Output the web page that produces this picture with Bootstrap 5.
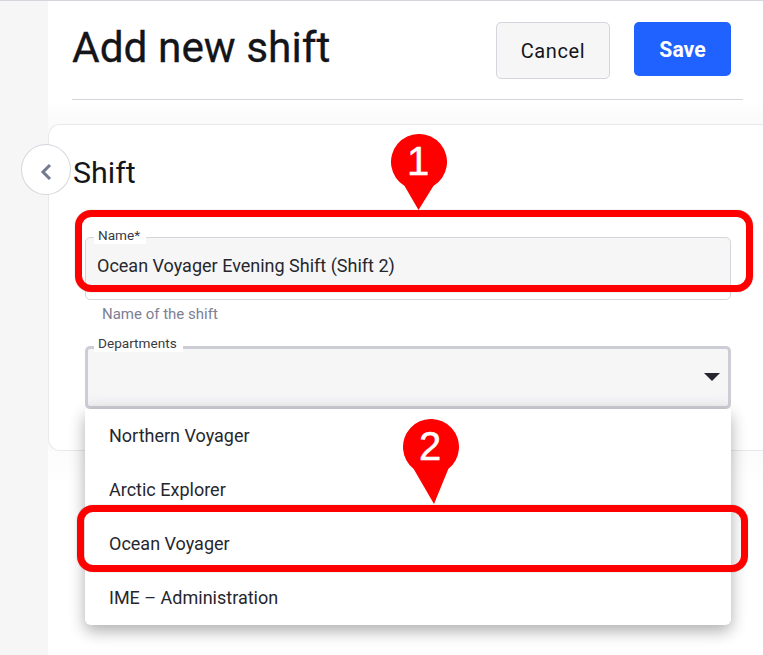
<!DOCTYPE html>
<html lang="en">
<head>
<meta charset="utf-8">
<link href="https://cdn.jsdelivr.net/npm/bootstrap@5.3.0/dist/css/bootstrap.min.css" rel="stylesheet">
<style>
html,body{height:100%;overflow:hidden}
body{font-family:Roboto,sans-serif;color:#14151a;background:#fff}
.shell{height:655px;border-top:1px solid #d5d5dc;position:relative;overflow:hidden}
.strip{width:48px;background:#f6f6f7;flex:none}
.mainpane{background:linear-gradient(#fff 0,#fff 100px,#fafafa 124px,#fafafa 449px,#fcfcfc 450px,#fff 490px)}
.headbar{margin:0 20px 0 24px;height:99px;border-bottom:1px solid #d5d5dc}
.pagetitle{font-size:42.4px;font-weight:400;line-height:48px;margin:0;padding-top:23px;-webkit-text-stroke:.3px #14151a}
.btn-cancel{width:114px;height:57px;margin-top:21px;margin-right:24px;background:#f6f6f7;border:1px solid #d5d5dc;border-radius:5px;color:#14151a;font-size:20px;letter-spacing:.6px;padding:0}
.btn-save{width:97px;height:54px;margin-top:21px;margin-right:12px;background:#1f62ff;border:0;border-radius:5px;color:#fff;font-size:21.2px;font-weight:700;padding:1px 0 0}
.formcard{margin-top:24px;height:327px;background:#fff;border:1px solid #e9e9ed;border-right:0;border-radius:12px 0 0 12px;padding:26px 0 0 24px;position:relative}
.backbtn{position:absolute;left:-28px;top:19px;width:50px;height:51px;border-radius:50%;background:#fff;border:1px solid #d5d5dc;padding:5px 0 0}
.cardtitle{font-size:30.4px;font-weight:400;line-height:44px;margin:0}
.fieldbox{margin:42px 32px 0 12px;height:63px;border:1px solid #d5d5dc;border-radius:5px;position:relative;background:linear-gradient(#f6f6f7 0,#f6f6f7 48px,#fff 48px);padding:14px 11px 0;font-size:18px;line-height:28px;color:#26272e}
.fieldlegend{position:absolute;left:8px;top:-12px;font-size:13.6px;line-height:18px;background:#fff;padding:0 6px 0 4px;color:#383a42}
.fieldhelp{margin:4px 0 0 29px;font-size:15px;line-height:20px;color:#7c8094}
.selectbox{margin:22px 32px 0 12px;height:63px;border:3px solid #cdcdd6;border-radius:5px;position:relative;background:linear-gradient(#f6f6f7 0,#f6f6f7 44px,#f0f0f3 100%)}
.selectbox .fieldlegend{left:6px;top:-15px}
.caret-down{position:absolute;right:8px;top:24px;width:0;height:0;border-left:8px solid transparent;border-right:8px solid transparent;border-top:8px solid #26272e}
.optmenu{position:absolute;left:85px;top:408px;width:646px;background:#fff;border-radius:0 0 6px 6px;box-shadow:0 6px 16px rgba(0,0,0,.32);font-size:18px;color:#26272e}
.optitem{height:54px;line-height:54px;padding-left:24px}
.mark-ring{position:absolute;border:7px solid #f00;border-radius:16px;box-shadow:0 0 1px rgba(0,0,0,.5)}
.ring-a{left:75px;top:209px;width:678px;height:82px}
.ring-b{left:77px;top:504px;width:671px;height:67px}
.pin{position:absolute;width:56px}
.pin-a{left:391px;top:133px;height:76px}
.pin-b{left:403px;top:418px;height:85px}
.pinnum{font-family:"Liberation Sans",sans-serif;font-size:40px;fill:#fff;stroke:#fff;stroke-width:.5;text-anchor:middle}
</style>
</head>
<body>
<div class="shell d-flex">
  <div class="strip"></div>
  <div class="mainpane flex-grow-1">
    <div class="headbar d-flex justify-content-between align-items-start">
      <h1 class="pagetitle">Add new shift</h1>
      <div class="d-flex align-items-start">
        <button class="btn btn-cancel" type="button">Cancel</button>
        <button class="btn btn-save" type="button">Save</button>
      </div>
    </div>
    <div class="formcard">
      <button class="backbtn d-flex align-items-center justify-content-center" type="button" aria-label="Back">
        <svg width="12" height="18" viewBox="0 0 12 18"><path d="M10 2 3 9l7 7" fill="none" stroke="#737a90" stroke-width="3"/></svg>
      </button>
      <h2 class="cardtitle">Shift</h2>
      <div class="fieldbox"><span class="fieldlegend">Name*</span>Ocean Voyager Evening Shift (Shift 2)</div>
      <div class="fieldhelp">Name of the shift</div>
      <div class="selectbox"><span class="fieldlegend">Departments</span><span class="caret-down"></span></div>
    </div>
  </div>
  <div class="optmenu">
    <div class="optitem">Northern Voyager</div>
    <div class="optitem">Arctic Explorer</div>
    <div class="optitem">Ocean Voyager</div>
    <div class="optitem">IME – Administration</div>
  </div>
  <div class="mark-ring ring-a"></div>
  <div class="mark-ring ring-b"></div>
  <svg class="pin pin-a" viewBox="0 0 56 76"><path d="M27.5 76 13.6 52A28 28 0 1 1 42.4 52Z" fill="#f00"/><text class="pinnum" x="27" y="41">1</text></svg>
  <svg class="pin pin-b" viewBox="0 0 56 85"><path d="M31 85 10.7 50A28 28 0 1 1 45.3 50Z" fill="#f00"/><text class="pinnum" x="27" y="41">2</text></svg>
</div>
<script src="https://cdn.jsdelivr.net/npm/bootstrap@5.3.0/dist/js/bootstrap.bundle.min.js"></script>
</body>
</html>
